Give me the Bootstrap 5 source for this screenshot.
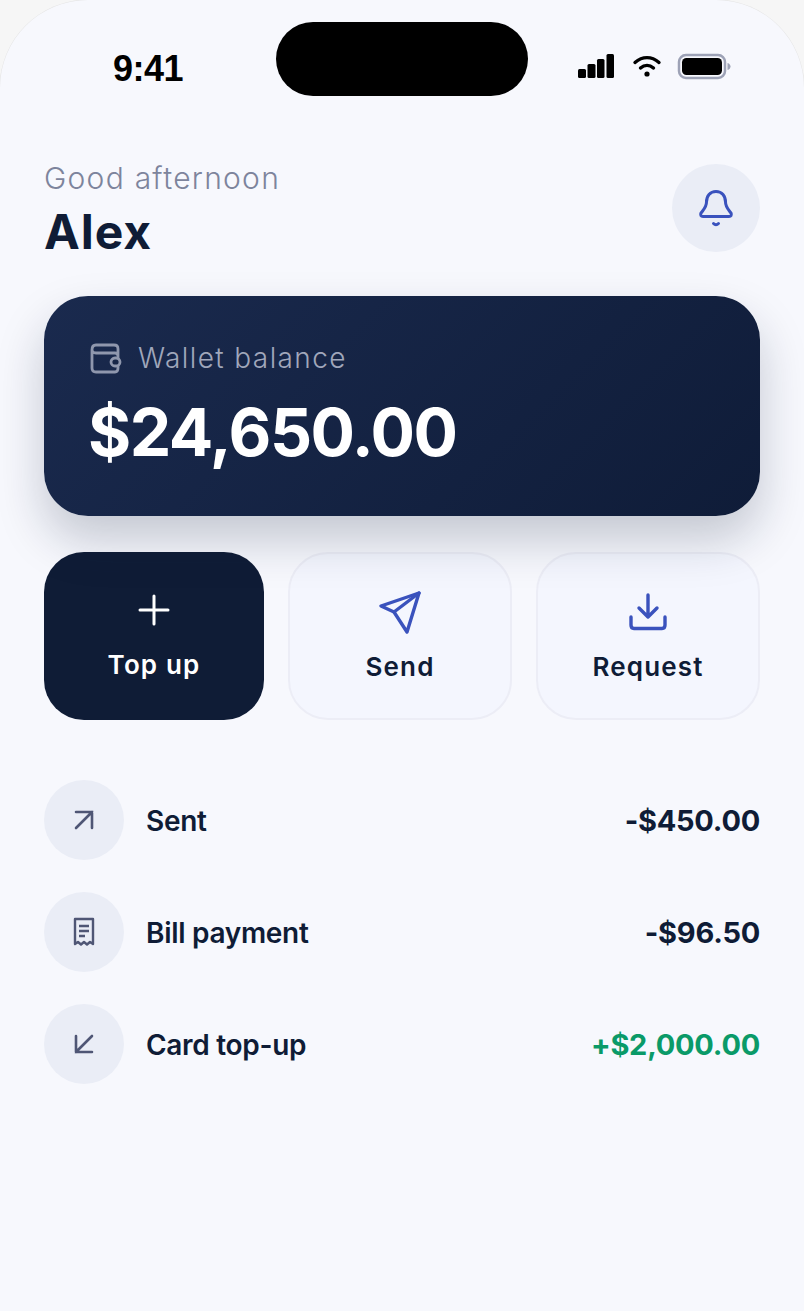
<!DOCTYPE html>
<html lang="en">
<head>
  <meta charset="UTF-8" />
  <meta name="viewport" content="width=device-width, initial-scale=1.0"/>
  <title>Wallet</title>
  <link href="https://cdn.jsdelivr.net/npm/bootstrap@5.3.0/dist/css/bootstrap.min.css" rel="stylesheet"/>
  <style>
    html, body { height: 100%; }
    body {
      background-color: #f6f6f6;
      font-family: "Inter", "Liberation Sans", sans-serif;
      color: #0f1c36;
      overflow: hidden;
    }
    .phone-screen {
      position: relative;
      height: 1311px;
      background-color: #f7f8fd;
      border-radius: 88px 88px 0 0;
      box-shadow: 0 0 0 0.5px rgba(0, 0, 0, 0.07);
      padding: 0 44px;
      overflow: hidden;
    }
    .island {
      position: absolute;
      left: 276px;
      top: 22px;
      width: 252px;
      height: 74px;
      border-radius: 37px;
      background-color: #000;
    }
    .status-row { height: 164px; padding: 44px 29px 0 69px; align-items: flex-start; }
    .clock {
      font-family: "Liberation Sans", sans-serif;
      font-weight: 700;
      font-size: 36px;
      line-height: 48px;
      color: #000;
      letter-spacing: -0.5px;
      margin-top: 1px;
    }
    .status-icons { height: 44px; }
    .wifi-ic { margin-left: 18px; }
    .batt-ic { margin-left: 15px; }
    .hello { font-size: 30px; line-height: 28px; color: #7d849c; font-weight: 300; letter-spacing: 1.25px; }
    .who { font-size: 48px; line-height: 56px; font-weight: 700; margin-top: 12px; letter-spacing: 0.9px; }
    .greet-block { padding-top: 8px; }
    .bell-btn {
      width: 88px; height: 88px; background-color: #eaedf6; border: 0; padding: 0;
    }
    .head-row { height: 88px; margin-bottom: 44px; }
    .balance-box {
      height: 220px;
      border: 0;
      border-radius: 44px;
      padding: 44px;
      background: linear-gradient(135deg, #1a2a4e 0%, #0f1c38 100%);
      box-shadow: 0 24px 48px rgba(15, 28, 54, 0.22);
      color: #fff;
    }
    .balance-label { font-size: 28px; line-height: 36px; color: #a0a7bb; font-weight: 300; letter-spacing: 1.4px; }
    .balance-sum { font-size: 66px; line-height: 80px; font-weight: 700; margin-top: 16px; letter-spacing: -1.45px; }
    .action-grid {
      display: grid;
      grid-template-columns: 220px 1fr 1fr;
      gap: 24px;
      margin-top: 36px;
    }
    .action-btn {
      height: 168px;
      border-radius: 40px;
      padding: 0;
      font-size: 26px;
      line-height: 32px;
      font-weight: 600;
      letter-spacing: 1.15px;
      gap: 17px;
    }
    .action-dark, .action-dark:hover { background-color: #0f1c36; color: #fff; border: 0; gap: 23px; padding-top: 3px; }
    .action-light, .action-light:hover { background-color: #f4f6fe; color: #0f1c36; border: 2px solid #ecedf6; }
    .tx-list { margin-top: 60px; gap: 32px; }
    .tx-row { background: transparent; border: 0; padding: 0; height: 80px; color: #0f1c36; }
    .tx-icon { width: 80px; height: 80px; background-color: #eaedf6; margin-right: 22px; }
    .tx-name { font-size: 28px; font-weight: 600; letter-spacing: -0.3px; margin-top: 2px; }
    .tx-sum { font-size: 29px; font-weight: 700; letter-spacing: -0.25px; margin-top: 2px; }
    .tx-plus { color: #0a9a68; }
  </style>
</head>
<body>
  <div class="phone-screen">
    <div class="island"></div>

    <div class="status-row d-flex justify-content-between">
      <span class="clock">9:41</span>
      <div class="status-icons d-flex align-items-center">
        <svg width="36" height="24" viewBox="0 0 36 24" fill="#000"><rect x="0" y="15" width="8" height="9" rx="1.5"/><rect x="9.5" y="10" width="8" height="14" rx="1.5"/><rect x="19" y="5" width="7.5" height="19" rx="1.5"/><rect x="28.5" y="0" width="7.5" height="24" rx="1.5"/></svg>
        <svg class="wifi-ic" width="30" height="24" viewBox="0 0 30 24" fill="none" stroke="#000" stroke-width="3.4" stroke-linecap="round"><path d="M3 8.5C10.500 2 19.500 2 27 8.500"/><path d="M8.500 14C12.500 10.500 17.500 10.500 21.500 14"/><circle cx="15" cy="20" r="2.600" fill="#000" stroke="none"/></svg>
        <svg class="batt-ic" width="54" height="28" viewBox="0 0 54 28"><rect x="2" y="3" width="46" height="23" rx="7" fill="none" stroke="#9da2b6" stroke-width="2.500"/><rect x="5" y="6" width="40" height="17" rx="4.500" fill="#000"/><path d="M50.500 11C52.500 11.500 53.500 13 53.500 14.500C53.500 16 52.500 17.500 50.500 18Z" fill="#9da2b6"/></svg>
      </div>
    </div>

    <div class="head-row d-flex justify-content-between align-items-center">
      <div class="greet-block">
        <div class="hello">Good afternoon</div>
        <div class="who">Alex</div>
      </div>
      <button type="button" class="bell-btn btn rounded-circle d-flex align-items-center justify-content-center">
        <svg width="40" height="40" viewBox="0 0 40 40" fill="none" stroke="#3a52bd" stroke-width="3" stroke-linecap="round" stroke-linejoin="round"><path d="M10.500 14C10.500 8 14 3.500 20 3.500C26 3.500 29.500 8 29.500 14C29.500 19 32 21 35 25C36 27 35 28.500 33 28.500H7C5 28.500 4 27 5 25C8 21 10.500 19 10.500 14Z"/><path d="M17.500 35.500C19 37 21 37 22.500 35.500"/></svg>
      </button>
    </div>

    <div class="card balance-box">
      <div class="balance-label d-flex align-items-center gap-3">
        <svg width="34" height="34" viewBox="0 0 34 34" fill="none" stroke="#8f97ad" stroke-width="2.800" stroke-linejoin="round"><path d="M4 9V27C4 29.500 5.500 31 8 31H27C29 31 30 29.500 30 27V8C30 5.500 28.500 4 26 4H8C5.500 4 4 6 4 9C4 11 5.500 12 8 12H27C29 12 30 13 30 15"/><rect x="23" y="17" width="9" height="8" rx="4" fill="#172647"/></svg>
        <span>Wallet balance</span>
      </div>
      <div class="balance-sum">$24,650.00</div>
    </div>

    <div class="action-grid">
      <button type="button" class="action-btn action-dark btn d-flex flex-column align-items-center justify-content-center">
        <svg width="32" height="32" viewBox="0 0 32 32" fill="none" stroke="#fff" stroke-width="3" stroke-linecap="round"><path d="M16 2V30M2 16H30"/></svg>
        <span>Top up</span>
      </button>
      <button type="button" class="action-btn action-light btn d-flex flex-column align-items-center justify-content-center">
        <svg width="44" height="44" viewBox="0 0 44 44" fill="none" stroke="#3a52bd" stroke-width="3.400" stroke-linecap="round" stroke-linejoin="round"><path d="M41 3L3 16L16 22L29 42Z"/><path d="M41 3L16 22"/></svg>
        <span>Send</span>
      </button>
      <button type="button" class="action-btn action-light btn d-flex flex-column align-items-center justify-content-center">
        <svg width="44" height="44" viewBox="0 0 44 44" fill="none" stroke="#3a52bd" stroke-width="3.400" stroke-linecap="round" stroke-linejoin="round"><path d="M22 5V27M13 18L22 27L31 18"/><path d="M5 27V35C5 37 6 38.500 8 38.500H36C38 38.500 39 37 39 35V27"/></svg>
        <span>Request</span>
      </button>
    </div>

    <div class="tx-list list-group list-group-flush">
      <div class="tx-row list-group-item d-flex align-items-center">
        <div class="tx-icon rounded-circle d-flex align-items-center justify-content-center">
          <svg width="24" height="24" viewBox="0 0 24 24" fill="none" stroke="#4f5675" stroke-width="2.600" stroke-linecap="round"><path d="M4 20L20 4M4 4H20V20"/></svg>
        </div>
        <span class="tx-name">Sent</span>
        <span class="tx-sum ms-auto">-$450.00</span>
      </div>
      <div class="tx-row list-group-item d-flex align-items-center">
        <div class="tx-icon rounded-circle d-flex align-items-center justify-content-center">
          <svg width="24" height="30" viewBox="0 0 24 30" fill="none" stroke="#4f5675" stroke-width="2.400" stroke-linejoin="round"><path d="M3 2H21V27L18 25L15 27.500L12 25L9 27.500L6 25L3 27Z"/><path d="M7 9H17M7 14H17M7 19H13"/></svg>
        </div>
        <span class="tx-name">Bill payment</span>
        <span class="tx-sum ms-auto">-$96.50</span>
      </div>
      <div class="tx-row list-group-item d-flex align-items-center">
        <div class="tx-icon rounded-circle d-flex align-items-center justify-content-center">
          <svg width="24" height="24" viewBox="0 0 24 24" fill="none" stroke="#4f5675" stroke-width="2.600" stroke-linecap="round"><path d="M20 4L4 20M4 4V20H20"/></svg>
        </div>
        <span class="tx-name">Card top-up</span>
        <span class="tx-sum tx-plus ms-auto">+$2,000.00</span>
      </div>
    </div>
  </div>
  <script src="https://cdn.jsdelivr.net/npm/bootstrap@5.3.0/dist/js/bootstrap.bundle.min.js"></script>
</body>
</html>
